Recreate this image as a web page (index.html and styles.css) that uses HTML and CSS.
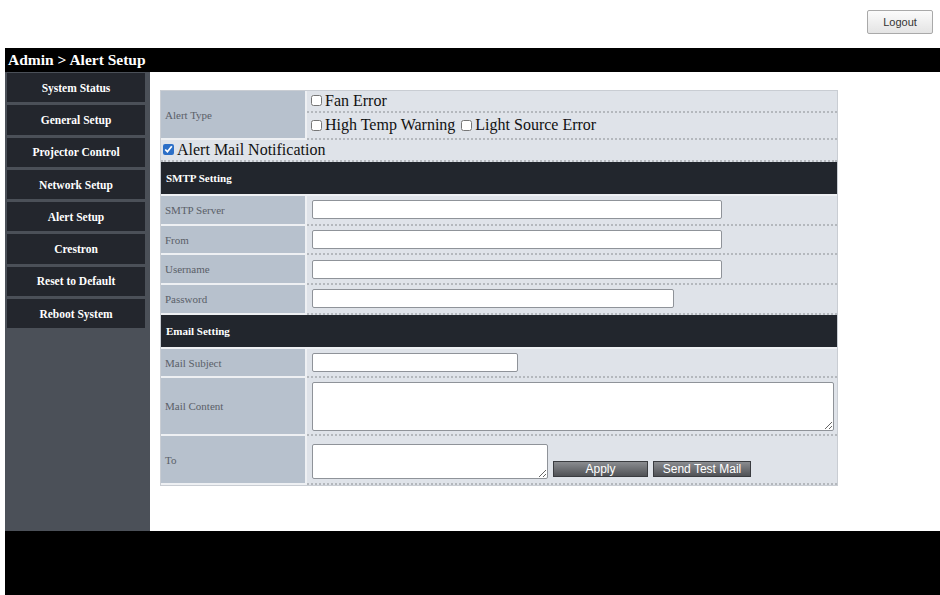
FILE: index.html
```html
<!DOCTYPE html>
<html lang="en">
  <head>
    <meta charset="UTF-8" />
    <title>Admin - Alert Setup</title>
    <link rel="stylesheet" href="styles.css">
  </head>
  <body>
    <!-- Top strip with logout -->
    <div class="topbar">
      <button class="logout">Logout</button>
    </div>

    <div class="titlebar">Admin &gt; Alert Setup</div>

    <div class="layout">
      <!-- Left menu -->
      <nav class="sidebar">
        <a href="#">System Status</a>
        <a href="#">General Setup</a>
        <a href="#">Projector Control</a>
        <a href="#">Network Setup</a>
        <a href="#">Alert Setup</a>
        <a href="#">Crestron</a>
        <a href="#">Reset to Default</a>
        <a href="#">Reboot System</a>
      </nav>

      <!-- Alert settings form -->
      <main class="content">
        <table class="form-table">
          <colgroup>
            <col class="col-label" />
            <col />
          </colgroup>
          <tr class="row-fan">
            <td class="label" rowspan="2">Alert Type</td>
            <td class="value check-row">
              <label><input type="checkbox" /> Fan Error</label>
            </td>
          </tr>
          <tr class="row-temp">
            <td class="value check-row">
              <label><input type="checkbox" /> High Temp Warning</label>
              <label><input type="checkbox" /> Light Source Error</label>
            </td>
          </tr>
          <tr class="row-notify">
            <td class="value check-row notify" colspan="2">
              <label><input type="checkbox" checked /> Alert Mail Notification</label>
            </td>
          </tr>
          <tr class="section">
            <td colspan="2">SMTP Setting</td>
          </tr>
          <tr class="row-input">
            <td class="label">SMTP Server</td>
            <td class="value"><input type="text" class="field-wide" /></td>
          </tr>
          <tr class="row-input">
            <td class="label">From</td>
            <td class="value"><input type="text" class="field-wide" /></td>
          </tr>
          <tr class="row-input">
            <td class="label">Username</td>
            <td class="value"><input type="text" class="field-wide" /></td>
          </tr>
          <tr class="row-input">
            <td class="label">Password</td>
            <td class="value"><input type="password" class="field-pass" /></td>
          </tr>
          <tr class="section">
            <td colspan="2">Email Setting</td>
          </tr>
          <tr class="row-input">
            <td class="label">Mail Subject</td>
            <td class="value"><input type="text" class="field-short" /></td>
          </tr>
          <tr class="row-content">
            <td class="label">Mail Content</td>
            <td class="value"><textarea class="mail-content"></textarea></td>
          </tr>
          <tr class="row-to">
            <td class="label">To</td>
            <td class="value">
              <div class="to-line">
                <textarea class="mail-to"></textarea>
                <button class="action">Apply</button>
                <button class="action">Send Test Mail</button>
              </div>
            </td>
          </tr>
        </table>
      </main>
    </div>

    <footer class="footer"></footer>
  </body>
</html>
```

FILE: styles.css
```css
/* General */
* {
  box-sizing: border-box;
}

body {
  margin: 0;
  font-family: "Liberation Serif", "Times New Roman", serif;
  background: #fff;
}

/* Logout strip */
.topbar {
  height: 48px;
  display: flex;
  justify-content: flex-end;
  align-items: flex-start;
  padding: 10px 7px 0 0;
}

.logout {
  width: 66px;
  height: 24px;
  font-family: "Liberation Sans", Arial, sans-serif;
  font-size: 11px;
  color: #333;
  background: linear-gradient(#fbfbfb, #e4e4e4);
  border: 1px solid #a9a9a9;
  border-radius: 2px;
}

/* Breadcrumb bar */
.titlebar {
  margin-left: 5px;
  height: 24px;
  background: #000;
  color: #fff;
  font-weight: bold;
  font-size: 15.5px;
  line-height: 24px;
  padding-left: 3px;
}

/* Page body */
.layout {
  display: flex;
  margin-left: 5px;
  height: 459px;
}

.sidebar {
  width: 145px;
  background: #4b5058;
  padding: 1px 5px 0 2px;
  display: flex;
  flex-direction: column;
  gap: 3px;
}

.sidebar a {
  height: 29.3px;
  background: #23262d;
  color: #fff;
  font-size: 11.5px;
  font-weight: bold;
  text-decoration: none;
  display: flex;
  align-items: center;
  justify-content: center;
}

.content {
  flex: 1;
  padding: 18px 0 0 10px;
}

/* Form table */
.form-table {
  width: 678px;
  border-collapse: separate;
  border-spacing: 0;
  background: #e9ecf0;
  border: 1px solid #c9cdd3;
  font-size: 11px;
}

.col-label {
  width: 146px;
}

.form-table td {
  padding: 0;
}

.label {
  background: #b7c1cd;
  color: #5a6068;
  padding-left: 4px !important;
  border-right: 2px solid #eef0f3;
  border-bottom: 2px solid #eef0f3;
}

.value {
  background: #dfe3e9;
  padding-left: 4px !important;
  border-bottom: 2px dotted #b4b8bd;
}

.check-row {
  font-size: 16px;
  color: #111;
}

.check-row label {
  display: inline-flex;
  align-items: center;
  margin-right: 2px;
}

.check-row input {
  width: 11px;
  height: 11px;
  margin: 0 3px 0 0;
  accent-color: #2c6fc7;
}

.row-fan td.value {
  height: 22px;
}

.row-temp td {
  height: 27px;
}

.row-notify td {
  height: 22px;
  padding-left: 2px !important;
}

.section td {
  height: 34px;
  background: #22262d;
  color: #fff;
  font-weight: bold;
  padding-left: 5px;
  border-bottom: 2px solid #eef0f3;
}

.row-input td {
  height: 29.7px;
}

.row-content td {
  height: 58px;
}

.row-to td {
  height: 49px;
}

input[type="text"],
input[type="password"],
textarea {
  height: 19px;
  border: 1px solid #8f9399;
  border-radius: 2px;
  background: #fff;
  margin-left: 1px;
  vertical-align: middle;
}

.field-wide {
  width: 410px;
}

.field-pass {
  width: 362px;
}

.field-short {
  width: 206px;
}

textarea {
  display: block;
  resize: both;
}

.mail-content {
  width: 522px;
  height: 49px;
}

.to-line {
  display: flex;
  align-items: flex-end;
  gap: 5px;
  padding-top: 3px;
}

.mail-to {
  width: 236px;
  height: 35px;
}

.action {
  height: 16px;
  padding: 0;
  border: 1px solid #3a3c40;
  background: linear-gradient(#8a8c90, #505256);
  color: #fff;
  font-family: "Liberation Sans", Arial, sans-serif;
  font-size: 12px;
  margin-bottom: 2px;
}

.action:first-of-type {
  width: 95px;
}

.action:last-of-type {
  width: 98px;
}

/* Bottom strip */
.footer {
  margin-left: 5px;
  height: 64px;
  background: #000;
}
```
